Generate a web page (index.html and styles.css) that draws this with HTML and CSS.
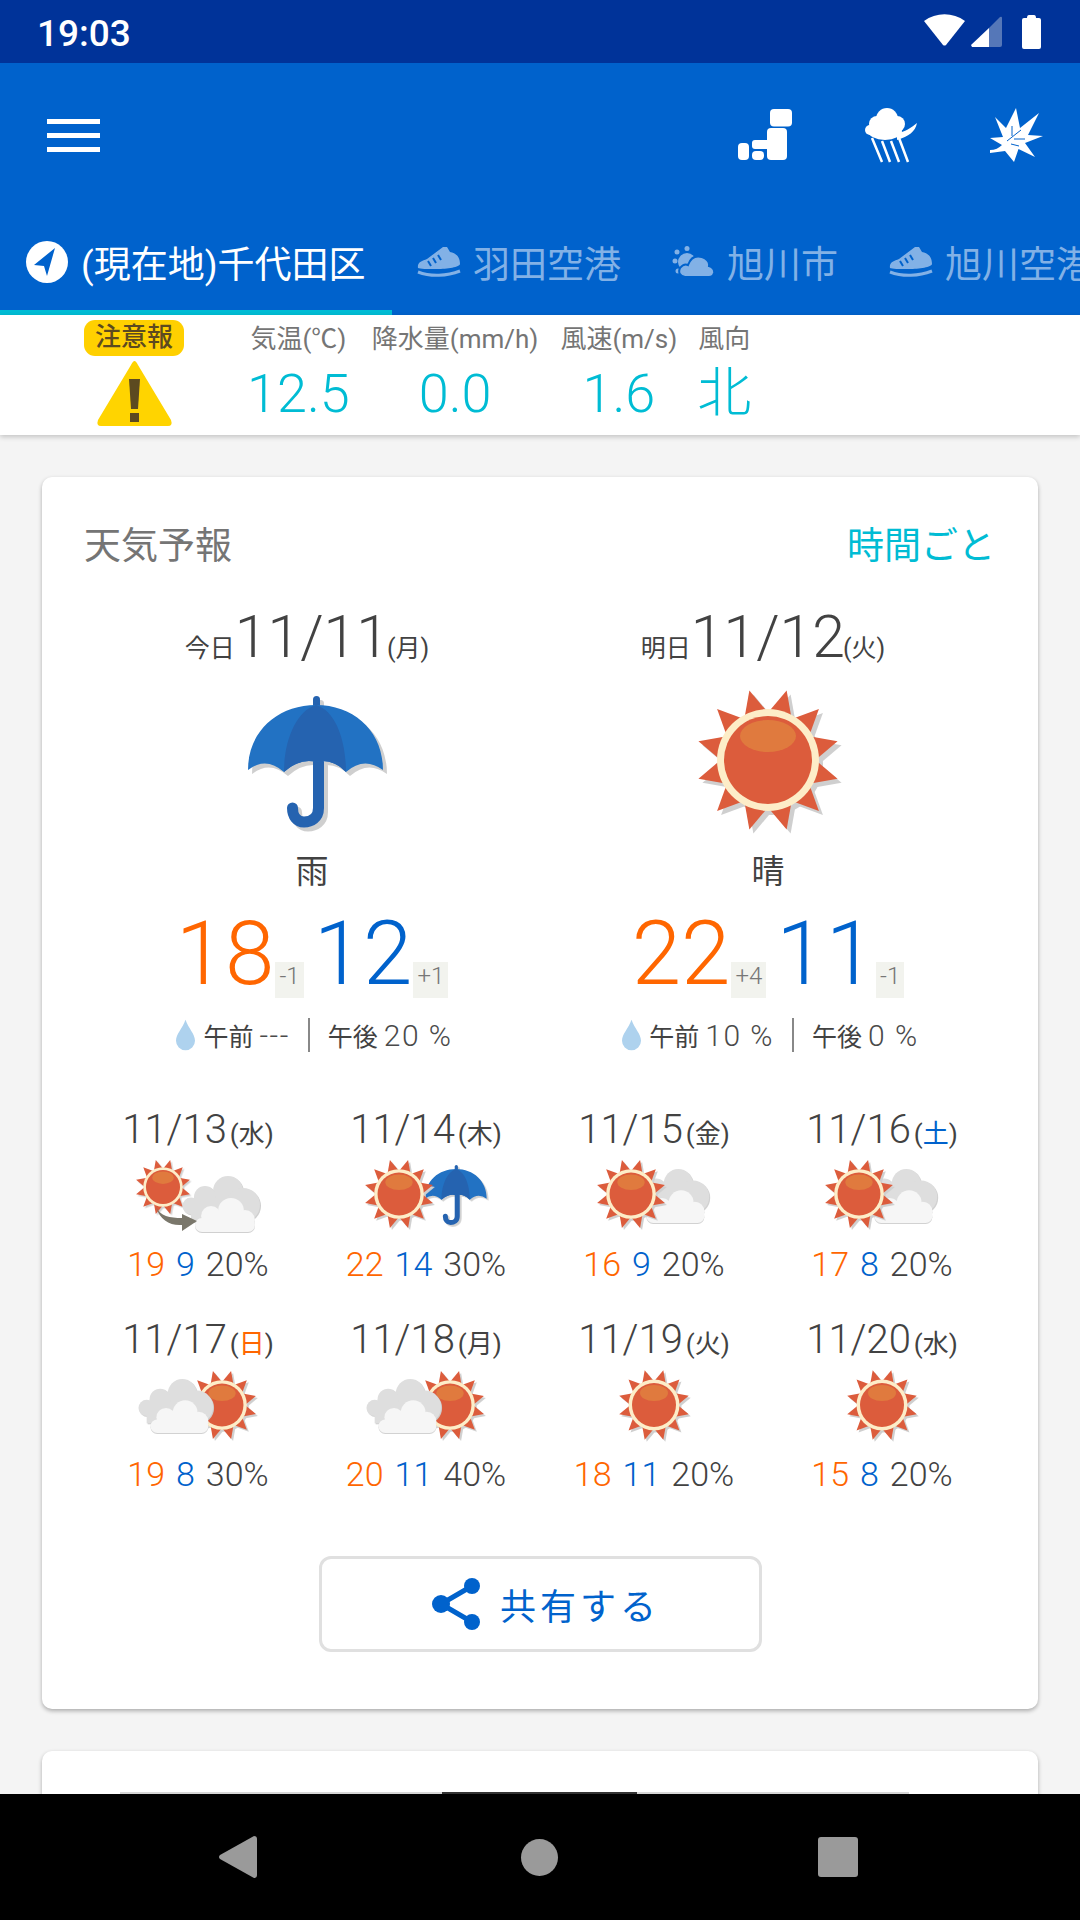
FILE: index.html
```html
<!DOCTYPE html>
<html lang="ja">
<head>
  <meta charset="UTF-8" />
  <title>天気予報</title>
  <link rel="stylesheet" href="styles.css">
</head>
<body>
  <svg class="defs" width="0" height="0">
    <defs>
      <symbol id="sun" viewBox="0 0 160 160">
        <g class="shade">
          <g fill="#dc5c3c">
            <polygon points="80,8 66,38 94,38" transform="rotate(15 80 80)"/>
            <polygon points="80,8 66,38 94,38" transform="rotate(45 80 80)"/>
            <polygon points="80,8 66,38 94,38" transform="rotate(75 80 80)"/>
            <polygon points="80,8 66,38 94,38" transform="rotate(105 80 80)"/>
            <polygon points="80,8 66,38 94,38" transform="rotate(135 80 80)"/>
            <polygon points="80,8 66,38 94,38" transform="rotate(165 80 80)"/>
            <polygon points="80,8 66,38 94,38" transform="rotate(195 80 80)"/>
            <polygon points="80,8 66,38 94,38" transform="rotate(225 80 80)"/>
            <polygon points="80,8 66,38 94,38" transform="rotate(255 80 80)"/>
            <polygon points="80,8 66,38 94,38" transform="rotate(285 80 80)"/>
            <polygon points="80,8 66,38 94,38" transform="rotate(315 80 80)"/>
            <polygon points="80,8 66,38 94,38" transform="rotate(345 80 80)"/>
          </g>
          <circle cx="80" cy="80" r="51" fill="#fdedc8"/>
        </g>
        <circle cx="80" cy="80" r="44" fill="#dc5c3c"/>
        <ellipse cx="80" cy="56" rx="28" ry="16" fill="#e07a3e"/>
      </symbol>
      <symbol id="umbrella" viewBox="0 0 140 140">
        <g class="shade">
          <rect x="65" y="0" width="7" height="14" rx="3.5" fill="#2563b0"/>
          <path d="M70.5 66V112C70.5 122 63 126 56 126C49 126 44.5 120 44.5 112" fill="none" stroke="#2563b0" stroke-width="11" stroke-linecap="round"/>
          <path d="M0 74C0 35 30 9 68 9C106 9 135 35 135 74Q116 60 98 76Q84 62 68 66Q52 62 36 76Q18 60 0 74Z" fill="#2272c3"/>
        </g>
        <path d="M68 9C48 15 36 45 36 76Q52 62 68 66Q84 62 98 76C98 45 88 15 68 9Z" fill="#2563b0"/>
      </symbol>
      <symbol id="cloud" viewBox="0 0 80 58">
        <g class="shade-soft" fill="#dedede">
          <circle cx="46" cy="16" r="15"/>
          <circle cx="23" cy="22" r="11"/>
          <circle cx="61" cy="30" r="17"/>
          <circle cx="9" cy="31" r="8.5"/>
          <rect x="9" y="24" width="52" height="23"/>
        </g>
        <g class="shade-thin" fill="#f6f6f6">
          <circle cx="49" cy="36" r="13"/>
          <circle cx="29" cy="41" r="10"/>
          <circle cx="63" cy="45" r="10"/>
          <rect x="13" y="43" width="60" height="14" rx="7"/>
        </g>
      </symbol>
      <symbol id="drop" viewBox="0 0 20 32">
        <path d="M10 0C13 9 20 15 20 22A10 10 0 0 1 0 22C0 15 7 9 10 0Z" fill="#aed2ee"/>
      </symbol>
      <symbol id="shoe" viewBox="0 0 44 31">
        <path d="M1 22C0 16 5 15 10 13L26 1L30 1L33 6C38 7 43 10 43 18C43 21 30 23 20 23C10 23 3 23 1 22Z" fill="#82b1e6"/>
        <path d="M1 26C14 31 30 30 43 25" fill="none" stroke="#82b1e6" stroke-width="3"/>
        <path d="M11 15L14 20M16 12L19 17M21 9L24 14" stroke="#0062cc" stroke-width="2"/>
      </symbol>
    </defs>
  </svg>

  <div class="status">
    <span class="clock">19:03</span>
    <svg class="wifi" width="41" height="32" viewBox="0 0 41 32"><path d="M0 7C12 -2 29 -2 41 7L22 31Q20.500 32 19 31Z" fill="#fff"/></svg>
    <svg class="signal" width="31" height="31" viewBox="0 0 31 31">
      <path d="M0 29L18 12V31H1Z" fill="#fff"/>
      <path d="M18 12L29 1Q31 0 31 2V29Q31 31 29 31H18Z" fill="#5577b8"/>
    </svg>
    <svg class="battery" width="19" height="34" viewBox="0 0 19 34"><path d="M5 3Q5 0 7 0H12Q14 0 14 3H17Q19 3 19 5V32Q19 34 17 34H2Q0 34 0 32V5Q0 3 2 3Z" fill="#fff"/></svg>
  </div>

  <header class="appbar">
    <div class="toolbar">
      <div class="menu"><i></i><i></i><i></i></div>
      <div class="tools">
        <svg width="54" height="54" viewBox="0 0 54 54" fill="#fff">
          <rect x="32" y="1" width="22" height="17.500" rx="4"/>
          <rect x="29" y="20" width="20" height="32" rx="4"/>
          <rect x="14" y="32" width="20" height="9" rx="3"/>
          <rect x="14" y="43" width="12" height="9" rx="4"/>
          <rect x="0" y="35" width="11" height="17" rx="4"/>
        </svg>
        <svg width="52" height="54" viewBox="0 0 52 54" fill="#fff">
          <circle cx="12" cy="16" r="8"/>
          <circle cx="22" cy="11" r="11"/>
          <circle cx="32" cy="16" r="8"/>
          <circle cx="5" cy="22" r="5"/>
          <ellipse cx="20" cy="23" rx="17" ry="9"/>
          <path d="M32 25C40 24 46 20 52 15C50 24 44 28 32 32Z"/>
          <path d="M7 30L17 54M17 33L25 54M26 33L34 54M34 30L43 54" stroke="#fff" stroke-width="2.500"/>
        </svg>
        <svg width="53" height="54" viewBox="0 0 53 54">
          <path d="M26 0L30 20L49 5L38 27L53 28L35 35L45 49L28.500 41L24 54L15 43C10 44 5 44 0 45L0 42C5 42 9 40 12 37L0 30L13 29L5 9L16 20Z" fill="#fff"/>
          <path d="M17 33L31 22M22 28L22 18M24 31L35 31M21 36L29 38" stroke="#0062cc" stroke-width="1"/>
        </svg>
      </div>
    </div>
    <nav class="tabs">
      <div class="tab tab-on">
        <svg width="42" height="42" viewBox="0 0 42 42"><circle cx="21" cy="21" r="21" fill="#fff"/><path d="M29 7L8 24L18 25L21 35Z" fill="#0062cc"/></svg>
        <span>(現在地)千代田区</span>
      </div>
      <div class="tab">
        <svg width="44" height="31"><use href="#shoe" width="44" height="31"/></svg>
        <span>羽田空港</span>
      </div>
      <div class="tab">
        <svg width="43" height="32" viewBox="0 0 43 32">
          <g fill="#82b1e6">
            <circle cx="15" cy="16" r="9"/>
            <circle cx="15" cy="2.500" r="2.500"/>
            <circle cx="3" cy="15" r="2.500"/>
            <circle cx="6" cy="25" r="2.500"/>
            <circle cx="5" cy="6" r="2.500"/>
            <path d="M13 31Q5 29 8 22Q12 17 16 19Q20 8 30 11Q38 14 37 20Q43 22 42 27Q41 31 37 31Z" stroke="#0062cc" stroke-width="2"/>
          </g>
        </svg>
        <span>旭川市</span>
      </div>
      <div class="tab">
        <svg width="44" height="31"><use href="#shoe" width="44" height="31"/></svg>
        <span>旭川空港</span>
      </div>
    </nav>
  </header>

  <div class="now">
    <div class="alert">
      <span class="alert-label">注意報</span>
      <svg width="75" height="66" viewBox="0 0 75 66">
        <path d="M37.500 1Q39 1 41 5L74 60Q76 66 71 66H4Q-1 66 1 60L34 5Q36 1 37.500 1Z" fill="#ffd400"/>
        <path d="M32 19H43L41 49H34Z" fill="#5c4a20"/>
        <rect x="33" y="53" width="9" height="9" fill="#5c4a20"/>
      </svg>
    </div>
    <div class="reading"><span class="reading-label">気温(℃)</span><span class="reading-value">12.5</span></div>
    <div class="reading"><span class="reading-label">降水量(mm/h)</span><span class="reading-value">0.0</span></div>
    <div class="reading"><span class="reading-label">風速(m/s)</span><span class="reading-value">1.6</span></div>
    <div class="reading"><span class="reading-label">風向</span><span class="reading-value">北</span></div>
  </div>

  <main class="content">
    <section class="card">
      <div class="card-head">
        <span class="card-title">天気予報</span>
        <span class="card-link">時間ごと</span>
      </div>

      <div class="days">
        <div class="day">
          <div class="day-date"><span class="day-word">今日</span><span class="day-num">11/11</span><span class="day-week">(月)</span></div>
          <svg class="day-icon" width="140" height="140"><use href="#umbrella" x="6" y="0" width="140" height="140"/></svg>
          <div class="day-text">雨</div>
          <div class="temps">
            <span class="big hi">18</span><span class="diff">-1</span>
            <span class="big lo">12</span><span class="diff">+1</span>
          </div>
          <div class="rain">
            <svg width="19" height="32"><use href="#drop" width="19" height="32"/></svg>
            <span class="rain-word">午前</span><span class="rain-num">---</span>
            <span class="rain-sep"></span>
            <span class="rain-word">午後</span><span class="rain-num">20 %</span>
          </div>
        </div>
        <div class="day">
          <div class="day-date"><span class="day-word">明日</span><span class="day-num">11/12</span><span class="day-week">(火)</span></div>
          <svg class="day-icon" width="160" height="140"><use href="#sun" x="0" y="-16" width="160" height="160"/></svg>
          <div class="day-text">晴</div>
          <div class="temps">
            <span class="big hi">22</span><span class="diff">+4</span>
            <span class="big lo">11</span><span class="diff">-1</span>
          </div>
          <div class="rain">
            <svg width="19" height="32"><use href="#drop" width="19" height="32"/></svg>
            <span class="rain-word">午前</span><span class="rain-num">10 %</span>
            <span class="rain-sep"></span>
            <span class="rain-word">午後</span><span class="rain-num">0 %</span>
          </div>
        </div>
      </div>

      <div class="week">
        <div class="cell">
          <div class="cell-date">11/13<span class="cell-week">(水)</span></div>
          <svg class="cell-icon" width="228" height="84">
            <use href="#sun" x="48" y="2" width="62" height="62"/>
            <use href="#cloud" x="98" y="21" width="80" height="58"/>
            <path d="M72 53C76 62 86 64 98 64L98 60L113 67L98 77L98 71C86 72 76 66 72 53Z" fill="#7a776b"/>
          </svg>
          <div class="cell-vals"><span class="hi">19</span><span class="lo">9</span><span>20%</span></div>
        </div>
        <div class="cell">
          <div class="cell-date">11/14<span class="cell-week">(木)</span></div>
          <svg class="cell-icon" width="228" height="84">
            <use href="#umbrella" x="113" y="11" width="64" height="64"/>
            <use href="#sun" x="48" y="1" width="78" height="78"/>
          </svg>
          <div class="cell-vals"><span class="hi">22</span><span class="lo">14</span><span>30%</span></div>
        </div>
        <div class="cell">
          <div class="cell-date">11/15<span class="cell-week">(金)</span></div>
          <svg class="cell-icon" width="228" height="84">
            <use href="#cloud" x="93" y="14" width="79" height="56"/>
            <use href="#sun" x="52" y="1" width="78" height="78"/>
          </svg>
          <div class="cell-vals"><span class="hi">16</span><span class="lo">9</span><span>20%</span></div>
        </div>
        <div class="cell">
          <div class="cell-date">11/16<span class="cell-week">(<b class="sat">土</b>)</span></div>
          <svg class="cell-icon" width="228" height="84">
            <use href="#cloud" x="93" y="14" width="79" height="56"/>
            <use href="#sun" x="52" y="1" width="78" height="78"/>
          </svg>
          <div class="cell-vals"><span class="hi">17</span><span class="lo">8</span><span>20%</span></div>
        </div>
        <div class="cell">
          <div class="cell-date">11/17<span class="cell-week">(<b class="sun">日</b>)</span></div>
          <svg class="cell-icon" width="228" height="84">
            <use href="#sun" x="99" y="2" width="78" height="78"/>
            <use href="#cloud" x="54" y="14" width="77" height="56"/>
          </svg>
          <div class="cell-vals"><span class="hi">19</span><span class="lo">8</span><span>30%</span></div>
        </div>
        <div class="cell">
          <div class="cell-date">11/18<span class="cell-week">(月)</span></div>
          <svg class="cell-icon" width="228" height="84">
            <use href="#sun" x="99" y="2" width="78" height="78"/>
            <use href="#cloud" x="54" y="14" width="77" height="56"/>
          </svg>
          <div class="cell-vals"><span class="hi">20</span><span class="lo">11</span><span>40%</span></div>
        </div>
        <div class="cell">
          <div class="cell-date">11/19<span class="cell-week">(火)</span></div>
          <svg class="cell-icon" width="228" height="84">
            <use href="#sun" x="74" y="1" width="80" height="80"/>
          </svg>
          <div class="cell-vals"><span class="hi">18</span><span class="lo">11</span><span>20%</span></div>
        </div>
        <div class="cell">
          <div class="cell-date">11/20<span class="cell-week">(水)</span></div>
          <svg class="cell-icon" width="228" height="84">
            <use href="#sun" x="74" y="1" width="80" height="80"/>
          </svg>
          <div class="cell-vals"><span class="hi">15</span><span class="lo">8</span><span>20%</span></div>
        </div>
      </div>

      <button class="share">
        <svg width="48" height="52" viewBox="0 0 48 52" fill="#0062cc">
          <circle cx="40" cy="8" r="8"/>
          <circle cx="9" cy="26" r="9"/>
          <circle cx="40" cy="44" r="8"/>
          <path d="M40 8L9 26L40 44" fill="none" stroke="#0062cc" stroke-width="5"/>
        </svg>
        <span>共有する</span>
      </button>
    </section>

    <section class="card card-next">
      <div class="next-line"><span></span></div>
    </section>
  </main>

  <div class="navbar">
    <svg width="38" height="42" viewBox="0 0 38 42"><path d="M1 19L35 0Q38 0 38 3V39Q38 42 35 42L1 23Q-1 21 1 19Z" fill="#9a9a9a"/></svg>
    <i class="nav-home"></i>
    <i class="nav-square"></i>
  </div>
</body>
</html>
```

FILE: styles.css
```css
html, body {
  margin: 0;
  padding: 0;
  height: 100%;
  overflow: hidden;
}
body {
  width: 1080px;
  height: 1920px;
  display: flex;
  flex-direction: column;
  font-family: Roboto, "Noto Sans CJK JP", sans-serif;
  background: #f4f4f4;
  color: #424242;
}
svg {
  display: block;
  overflow: visible;
}
.defs {
  position: absolute;
}
.shade {
  filter: drop-shadow(4px 4px 0 #cfcfcf);
}
.shade-soft {
  filter: drop-shadow(1px 1px 0 #cfcfcf);
}
.shade-thin {
  filter: drop-shadow(0 1px 0 #d0d0d0);
}

/* status bar */
.status {
  height: 63px;
  flex: none;
  background: #003399;
  display: flex;
  align-items: center;
  color: #fff;
}
.clock {
  margin-left: 37px;
  margin-right: auto;
  padding-top: 4px;
  font-size: 37px;
  font-weight: 500;
}
.wifi {
  margin-top: -3px;
}
.signal {
  margin-left: 6px;
}
.battery {
  margin-left: 20px;
  margin-right: 39px;
}

/* app bar */
.appbar {
  flex: none;
  background: #0062cc;
}
.toolbar {
  height: 144px;
  display: flex;
  align-items: center;
  justify-content: space-between;
  padding: 0 37px 0 47px;
}
.menu {
  display: flex;
  flex-direction: column;
  gap: 9px;
}
.menu i {
  display: block;
  width: 53px;
  height: 5px;
  background: #fff;
}
.tools {
  display: flex;
  align-items: center;
  gap: 73px;
}
.tabs {
  height: 108px;
  display: flex;
  overflow: hidden;
}
.tab {
  flex: none;
  box-sizing: border-box;
  height: 108px;
  display: flex;
  align-items: center;
  gap: 12px;
  padding: 1px 26px 0 25px;
  font-size: 37px;
  color: #82b1e6;
  white-space: nowrap;
}
.tab-on {
  color: #fff;
  position: relative;
  width: 392px;
  gap: 13px;
  padding-left: 26px;
}
.tab-on::after {
  content: "";
  position: absolute;
  left: 0;
  right: 0;
  bottom: 0;
  height: 5px;
  background: #00bcd4;
}

/* current readings */
.now {
  flex: none;
  position: relative;
  height: 120px;
  background: #fff;
  box-shadow: 0 2px 5px rgba(0, 0, 0, 0.2);
  display: flex;
  gap: 22px;
  padding-left: 84px;
}
.alert {
  width: 100px;
  margin-right: 41px;
  display: flex;
  flex-direction: column;
  align-items: center;
  gap: 4px;
  padding-top: 5px;
}
.alert-label {
  width: 100px;
  height: 36px;
  line-height: 35px;
  text-align: center;
  background: #ffd000;
  border-radius: 11px;
  font-size: 26px;
  font-weight: 500;
  color: #5c4a20;
}
.reading {
  display: flex;
  flex-direction: column;
  align-items: center;
}
.reading:last-child {
  margin-left: -2px;
}
.reading-label {
  margin-top: 6px;
  font-size: 26px;
  line-height: 36px;
  color: #757575;
  white-space: nowrap;
}
.reading-value {
  margin-top: 4px;
  font-size: 54px;
  font-weight: 300;
  line-height: 66px;
  color: #00bcd4;
}

/* cards */
.content {
  flex: 1;
  min-height: 0;
  overflow: hidden;
  padding: 42px 42px 0;
}
.card {
  box-sizing: border-box;
  height: 1232px;
  padding: 0 42px;
  background: #fff;
  border-radius: 10px;
  box-shadow: 0 2px 4px rgba(0, 0, 0, 0.3);
  position: relative;
}
.card-head {
  display: flex;
  justify-content: space-between;
  padding-top: 46px;
  line-height: 48px;
  font-size: 37px;
  color: #757575;
}
.card-link {
  color: #00bcd4;
  margin-right: 1px;
}

.hi {
  color: #ff6600;
}
.lo {
  color: #0062cc;
}

/* today and tomorrow */
.days {
  display: flex;
  margin-top: 31px;
}
.day {
  width: 50%;
  display: flex;
  flex-direction: column;
  align-items: center;
}
.day-date {
  display: flex;
  align-items: baseline;
  height: 70px;
  margin-right: 10px;
}
.day-word, .day-week {
  font-size: 25px;
}
.day-num {
  font-size: 59px;
  font-weight: 300;
}
.day-week {
  margin-left: -2px;
}
.day-icon {
  margin-top: 24px;
}
.day-text {
  font-size: 33px;
  line-height: 50px;
  margin-top: 11px;
}
.temps {
  display: flex;
  align-items: baseline;
  margin-top: 5px;
  height: 104px;
}
.big {
  font-size: 89px;
  font-weight: 300;
  line-height: 104px;
}
.diff {
  margin-left: 1px;
  margin-right: 10px;
  padding: 0 4px 8px;
  background: #f2f3ee;
  font-size: 24px;
  font-weight: 300;
  line-height: 28px;
  color: #777;
}
.diff:last-child {
  margin-right: 0;
}
.rain {
  display: flex;
  align-items: center;
  margin-top: 11px;
  margin-left: 5px;
  height: 36px;
}
.rain-word {
  margin-left: 8px;
  font-size: 25px;
}
.rain-num {
  margin-left: 6px;
  font-size: 30px;
  font-weight: 300;
  letter-spacing: 1.5px;
  color: #4a4a4a;
}
.rain-sep {
  width: 2px;
  height: 34px;
  margin-left: 18px;
  margin-right: 10px;
  background: #888;
}

/* week */
.week {
  display: grid;
  grid-template-columns: repeat(4, 228px);
  grid-auto-rows: 210px;
  margin-top: 49px;
}
.cell {
  display: flex;
  flex-direction: column;
  align-items: center;
}
.cell-date {
  height: 52px;
  line-height: 56px;
  font-size: 40px;
  font-weight: 300;
  white-space: nowrap;
}
.cell-week {
  margin-left: 3px;
  font-size: 26px;
  font-weight: 400;
}
.cell-week b {
  font-weight: 400;
}
.sat {
  color: #0062cc;
}
.sun {
  color: #ff6600;
}
.cell-icon {
  flex: none;
  height: 90px;
}
.cell-vals {
  display: flex;
  gap: 11px;
  font-size: 34px;
  font-weight: 300;
  line-height: 40px;
}

/* share button */
.share {
  display: flex;
  align-items: center;
  justify-content: center;
  gap: 20px;
  box-sizing: border-box;
  width: 443px;
  height: 96px;
  margin: 34px auto 0;
  padding: 0 0 0 12px;
  background: #fff;
  border: 3px solid #e0e0e0;
  border-radius: 12px;
  font-family: inherit;
  font-size: 36px;
  letter-spacing: 4px;
  color: #0062cc;
}

.card-next {
  margin-top: 42px;
  padding: 41px 129px 0 78px;
}
.next-line {
  height: 2px;
  background: #d6d6d6;
}
.next-line span {
  display: block;
  width: 195px;
  height: 2px;
  margin-left: 322px;
  background: #333;
}

/* nav bar */
.navbar {
  flex: none;
  height: 126px;
  background: #000;
  display: flex;
  align-items: center;
  position: relative;
  padding-left: 219px;
}
.nav-home {
  width: 37px;
  height: 37px;
  margin-left: 264px;
  border-radius: 50%;
  background: #9a9a9a;
}
.nav-square {
  width: 40px;
  height: 40px;
  margin-left: 260px;
  border-radius: 3px;
  background: #9a9a9a;
}
```
